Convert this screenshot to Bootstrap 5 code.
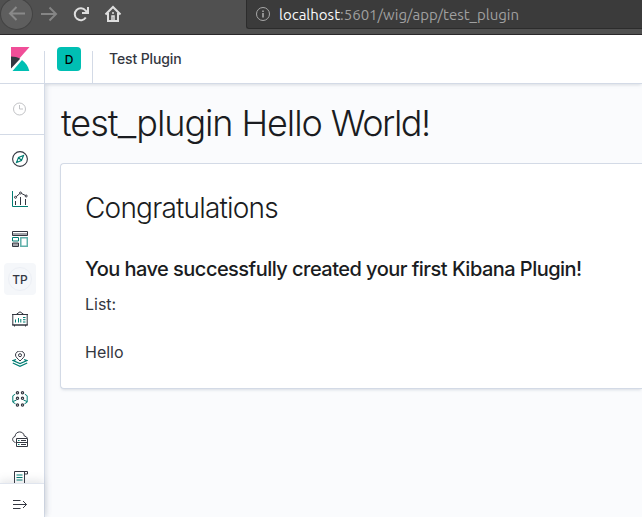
<!DOCTYPE html>
<html lang="en">
<head>
<meta charset="utf-8">
<meta name="viewport" content="width=device-width, initial-scale=1">
<title>Test Plugin</title>
<link href="https://cdn.jsdelivr.net/npm/bootstrap@5.3.0/dist/css/bootstrap.min.css" rel="stylesheet">
<style>
body{font-family:Inter,"Liberation Sans",sans-serif;color:#343741;background:#fafbfd;letter-spacing:-.005em}
svg{display:block;fill:none;flex-shrink:0}
.browser-bar{height:35px;background:#505050;border-bottom:1px solid #2b292b}
.back-btn{width:33px;height:32px;margin-top:-2px;border-radius:50%;background:#5e5e5e;border:1px solid #434343}
.bar-icon{width:32px;height:28px}
.address{height:29px;margin-left:117px;padding-left:8px;background:#3b3b3b;border:1px solid #2c2c2c;border-width:0 0 1px 1px;border-radius:0 0 0 3px;font-family:Ubuntu,"Noto Sans",sans-serif;font-size:15px;color:#a0a0a0}
.address b{font-weight:400;color:#f9f9fa}
.address .url{letter-spacing:0;line-height:28px;margin:1px 0 0 8px}
.app-header{height:49px;background:#fff;border-bottom:1px solid #d3dae6;position:relative;z-index:2;box-shadow:0 2px 3px -1px rgba(152,162,179,.35)}
.logo-cell{width:44px;padding:12px 0 0 11px}
.rule{width:1px;height:32px;background:#d3dae6}
.space{width:24px;height:24px;border-radius:4px;background:#00bfb3;color:#000;font-size:12px;font-weight:500;margin:0 11px 0 12px;padding-top:1px}
.crumb{font-size:14px;font-weight:500;margin:-2px 0 0 16px;letter-spacing:-.12px}
.side{width:45px;background:#fff;border-right:1px solid #d3dae6;box-shadow:2px 0 4px rgba(152,162,179,.25);position:relative;z-index:3}
.recent{height:51px;border-bottom:1px solid #d3dae6;padding:0 4px 1px 0}
.apps{padding:4px 4px 0 0;flex:1 1 0;min-height:0}
.apps>div{height:40px}
.tp{width:32px;height:32px;border-radius:4px;background:#f5f7fa}
.tp span{width:24px;height:24px;border-radius:50%;border:1px solid #eceff5;font-size:12px;font-weight:500;padding-top:1px}
.collapse-row{height:34px;padding:6px 4px 0 0;background:#fff;border-top:1px solid #e0e5ee;box-shadow:0 -3px 8px rgba(105,112,125,.16);position:relative}
.dk{stroke:#343741}.tl{stroke:#017d73}
.page-body{padding:15px 0 0 15px}
h1{font-size:36px;font-weight:300;line-height:48px;letter-spacing:-1.08px;color:#1a1c21;margin:0 0 16px 1px}
h1 .us{display:inline-block;transform:scaleX(1.15);margin:0 2px}
h1 .wd{letter-spacing:-1.5px}
.panel{height:226px;border:1px solid #d3dae6;border-right:0;border-radius:4px 0 0 4px;background:#fff;padding:24px;box-shadow:0 2px 3px -1px rgba(152,162,179,.35)}
h2{font-size:28px;font-weight:300;line-height:40px;letter-spacing:-.8px;color:#1a1c21;margin-bottom:25px}
h3{font-size:20px;font-weight:500;line-height:32px;letter-spacing:-.53px;color:#1a1c21;margin-bottom:7px}
.panel p{font-size:16px;line-height:24px;margin-bottom:24px;letter-spacing:0}
</style>
<script src="https://cdn.jsdelivr.net/npm/bootstrap@5.3.0/dist/js/bootstrap.bundle.min.js"></script>
</head>
<body class="vh-100 overflow-hidden d-flex flex-column">
<div class="browser-bar d-flex align-items-start flex-shrink-0">
  <div class="back-btn d-flex align-items-center justify-content-center"><svg width="18" height="18" viewBox="0 0 18 18" stroke="#898989" stroke-width="2"><path d="M17 8.500H2M8.500 2 2 8.500 8.500 15"/></svg></div>
  <div class="bar-icon d-flex align-items-center justify-content-center"><svg width="18" height="18" viewBox="0 0 18 18" stroke="#858585" stroke-width="2"><path d="M1 9h15M9.500 2.500 16 9 9.500 15.500"/></svg></div>
  <div class="bar-icon d-flex align-items-center justify-content-center"><svg width="16" height="16" viewBox="0 0 16 16" stroke="#dedede" stroke-width="2"><path d="M12.800 11.500A6 6 0 1 1 12.500 4.500L14 6"/><path d="M15 1v6H9" /></svg></div>
  <div class="bar-icon d-flex align-items-center justify-content-center"><svg width="18" height="18" viewBox="0 0 18 18" stroke="#dedede" stroke-width="2"><path d="M1.500 9.500 9 2l7.500 7.500M4 8v8h10V8"/><path d="M8 16v-5h2v5M8 8h2" stroke-width="1.500"/></svg></div>
  <div class="address flex-fill d-flex align-items-center"><svg width="16" height="16" viewBox="0 0 16 16" stroke="#a8a8a8"><circle cx="8" cy="8" r="6.500"/><path d="M8 7v4.500M8 4.500V6" stroke-width="1.600"/></svg><span class="url"><b>localhost</b>:5601/wig/app/test_plugin</span></div>
</div>
<header class="app-header d-flex align-items-start flex-shrink-0">
  <div class="logo-cell d-flex flex-shrink-0"><svg width="19" height="24" viewBox="0 0 19 24"><path fill="#f04e98" d="M0 0h18.500L0 21z"/><path fill="#343741" d="M0 9.500c3.500 0 6.600.8 9.200 2.200L0 21.500z"/><path fill="#00bfb3" d="M11 13c3.700 2.600 6.300 6.500 7.300 11H1.500z"/></svg></div>
  <div class="d-flex align-items-end h-100"><div class="rule"></div></div>
  <div class="d-flex align-items-center h-100"><div class="space d-flex align-items-center justify-content-center">D</div></div>
  <div class="d-flex align-items-end h-100"><div class="rule"></div></div>
  <div class="d-flex align-items-center h-100"><span class="crumb">Test Plugin</span></div>
</header>
<div class="d-flex flex-fill overflow-hidden">
  <nav class="side d-flex flex-column flex-shrink-0">
    <div class="recent d-flex align-items-center justify-content-center flex-shrink-0"><svg width="16" height="16" viewBox="0 0 16 16" stroke="#c2c3c6"><circle cx="7.500" cy="8" r="6"/><path d="M7.500 4v4H11"/></svg></div>
    <div class="apps overflow-hidden">
      <div class="d-flex align-items-center justify-content-center"><svg width="16" height="16" viewBox="0 0 16 16"><circle class="dk" cx="8" cy="8" r="7.400" stroke-width="1.100"/><path class="tl" d="m11.500 4.500-2 5-5 2 2-5zM6.500 6.500l3 3" stroke-width="1.100"/></svg></div>
      <div class="d-flex align-items-center justify-content-center"><svg width="16" height="16" viewBox="0 0 16 16"><path class="tl" d="M.5 0v15.500H16"/><path class="dk" d="M3.500 10v4M8.500 6v8M13.500 8v6M4.200 5.700l3.500-3M9.500 2.500l4 2"/><circle class="dk" cx="3.500" cy="6.300" r="1"/><circle class="dk" cx="8.500" cy="2" r="1"/><circle class="dk" cx="14.200" cy="5" r="1"/></svg></div>
      <div class="d-flex align-items-center justify-content-center"><svg width="16" height="16" viewBox="0 0 16 16"><path class="dk" fill="#a2a4aa" d="M.5.5h15v4H.5zM.5 12h6v3.500H.5z"/><path fill="#fff" d="M1 1h14v1H1z"/><path class="tl" d="M.5 6.500h6v3.500H.5z"/><path stroke="#5fb0aa" stroke-width="1.500" d="M8.800 6.700h6.500v8.600H8.800z"/></svg></div>
      <div class="d-flex align-items-center justify-content-center"><div class="tp d-flex align-items-center justify-content-center"><span class="d-flex align-items-center justify-content-center">TP</span></div></div>
      <div class="d-flex align-items-center justify-content-center"><svg width="16" height="16" viewBox="0 0 16 16"><path class="dk" d="M.8 3.500h14.400v10.500H.8zM0 3.500h16M0 14h16M4.500 3.200 8 .8l3.500 2.400M2.500 14v1.500M13.500 14v1.500"/><path class="tl" d="M3.500 8.500v3M6.500 7v4.500M8.800 8v3.500M11 6.500h2.500M11 8.700h2.500M11 11h2.500"/></svg></div>
      <div class="d-flex align-items-center justify-content-center"><svg width="16" height="16" viewBox="0 0 16 16"><path class="dk" d="M8 10C5.500 7.500 3.500 6 3.500 4a4.500 4 0 0 1 9 0c0 2-2 3.500-4.500 6z"/><circle class="dk" cx="8" cy="4.200" r="1.500"/><path class="tl" stroke-width="1.200" d="M4 8.500 1 9.600 8 12.500l7-2.900-3-1.100M.8 12 8 15.300l7.200-3.300"/></svg></div>
      <div class="d-flex align-items-center justify-content-center"><svg width="16" height="16" viewBox="0 0 16 16"><path class="tl" d="M3.200 3.200.8 4.800v6.400l2.700 1.600M12.800 3.200l2.400 1.600v6.400l-2.700 1.600M1 10.500l3.500-1.500M15 10.500l-3.500-1.500"/><g class="dk" stroke-width="1.200"><circle cx="5.500" cy="1.700" r="1.100"/><circle cx="10.500" cy="1.700" r="1.100"/><circle cx="5.500" cy="7.200" r="1.100"/><circle cx="10.500" cy="7.200" r="1.100"/><circle cx="5.500" cy="14" r="1.100"/><circle cx="10.500" cy="14" r="1.100"/></g></svg></div>
      <div class="d-flex align-items-center justify-content-center"><svg width="16" height="16" viewBox="0 0 16 16"><path class="dk" d="M3.500 11.500C-.5 10.500 0 6 3 5.500 3.500-.5 11.500-.5 12.300 5c1.500.2 2.500 1 3 2M4.500 7.500h11v8h-11zM4.500 11.500h11M9 9.500h5M9 13.500h5"/><path class="tl" d="M6 9.500h1.500M6 13.500h1.500"/></svg></div>
      <div class="d-flex align-items-center justify-content-center"><svg width="16" height="16" viewBox="0 0 16 16"><path class="dk" d="M2.500 12V.5h13v2.500h-2.500M12.500.5V14M0 12.500h10"/><path class="tl" d="M4.500 4h6M4.500 6.500h6M4.500 9h6"/></svg></div>
    </div>
    <div class="collapse-row d-flex align-items-center justify-content-center flex-shrink-0"><svg width="16" height="16" viewBox="0 0 16 16" class="dk"><path d="M1 4.500h7.500M1 8.500h13.500M1 12.500h7.500M11 5l3.500 3.500L11 12"/></svg></div>
  </nav>
  <main class="page-body flex-fill">
    <h1>test<span class="us">_</span>plugin Hello <span class="wd">World!</span></h1>
    <section class="panel">
      <h2>Congratulations</h2>
      <h3>You have successfully created your first Kibana Plugin!</h3>
      <p>List:</p>
      <p class="mb-0">Hello</p>
    </section>
  </main>
</div>
</body>
</html>
